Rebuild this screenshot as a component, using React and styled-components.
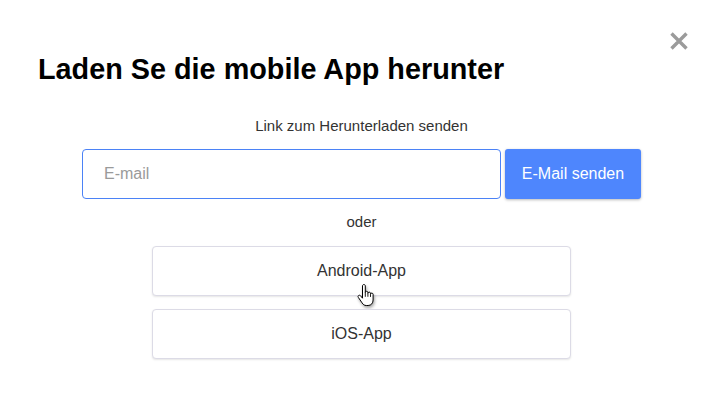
import React, { useState } from "react"
import styled, { createGlobalStyle } from "styled-components"

const GlobalStyle = createGlobalStyle`
  html, body {
    margin: 0;
    padding: 0;
    background: #fff;
  }

  body {
    font-family: "Liberation Sans", Arial, sans-serif;
    color: #333;
  }
`

const Dialog = styled.div`
  position: relative;
  width: 723px;
  height: 409px;
  box-sizing: border-box;
  padding: 52px 38px 0;
  background: #fff;
  border-radius: 6px;
  display: flex;
  flex-direction: column;
`

const CloseButton = styled.button`
  position: absolute;
  top: 30px;
  right: 33px;
  width: 22px;
  height: 22px;
  padding: 0;
  border: none;
  background: transparent;
  cursor: pointer;

  svg {
    display: block;
  }
`

const Title = styled.h2`
  margin: 0;
  font-size: 28.8px;
  line-height: 34.5px;
  font-weight: 700;
  color: #000;
`

const Body = styled.div`
  display: flex;
  flex-direction: column;
  align-items: center;
  margin: 30px -38px 0;
`

const Hint = styled.p`
  margin: 0;
  font-size: 15px;
  line-height: 18px;
  color: #333;
`

const SendRow = styled.form`
  display: flex;
  gap: 4px;
  margin-top: 14px;
`

const EmailInput = styled.input`
  width: 419px;
  height: 50px;
  box-sizing: border-box;
  padding: 0 21px;
  border: 1px solid #4b82f6;
  border-radius: 4px;
  font-family: inherit;
  font-size: 16px;
  color: #333;
  outline: none;

  &::placeholder {
    color: #9a9a9a;
  }
`

const SendButton = styled.button`
  width: 136px;
  height: 50px;
  border: none;
  border-radius: 3px;
  background: #4e86fd;
  color: #fff;
  font-family: inherit;
  font-size: 16px;
  box-shadow: 0 1px 3px rgba(0, 0, 0, 0.28);
  cursor: pointer;
`

const Divider = styled.span`
  margin: 14px 0 15px;
  font-size: 15px;
  line-height: 18px;
  color: #333;
`

const StoreList = styled.div`
  display: flex;
  flex-direction: column;
  gap: 13px;
`

const StoreButton = styled.button`
  position: relative;
  width: 419px;
  height: 50px;
  border: 1px solid #dcdbe6;
  border-radius: 4px;
  background: #fff;
  color: #333;
  font-family: inherit;
  font-size: 16px;
  box-shadow: 0 1px 2px rgba(0, 0, 0, 0.1);
  cursor: pointer;
`

const Pointer = styled.svg`
  position: absolute;
  left: 203px;
  top: 37px;
  pointer-events: none;
  filter: drop-shadow(1px 2px 1.5px rgba(0, 0, 0, 0.35));
`

const stores = ["Android-App", "iOS-App"]

const App = () => {
  const [email, setEmail] = useState("")

  return (
    <>
      <GlobalStyle />
      <Dialog>
        <CloseButton aria-label="Schließen">
          <svg width="22" height="22" viewBox="0 0 22 22">
            <path
              d="M3.5 3.5L18.5 18.5M18.5 3.5L3.5 18.5"
              stroke="#9b9b9b"
              strokeWidth="3.4"
              strokeLinecap="butt"
            />
          </svg>
        </CloseButton>
        <Title>Laden Se die mobile App herunter</Title>
        <Body>
          <Hint>Link zum Herunterladen senden</Hint>
          <SendRow onSubmit={(e) => e.preventDefault()}>
            <EmailInput
              type="email"
              placeholder="E-mail"
              value={email}
              onChange={(e) => setEmail(e.target.value)}
            />
            <SendButton type="submit">E-Mail senden</SendButton>
          </SendRow>
          <Divider>oder</Divider>
          <StoreList>
            {stores.map((store, index) => (
              <StoreButton key={store}>
                {store}
                {index === 0 && (
                  <Pointer width="20" height="23" viewBox="0 0 20 23">
                    <path
                      d="M6.5 2c0-.9.6-1.5 1.4-1.5S9.3 1.1 9.3 2v6.6c0-.8.6-1.3 1.3-1.3s1.3.5 1.3 1.3v.8c0-.8.6-1.3 1.3-1.3s1.3.5 1.3 1.3v.9c0-.7.6-1.2 1.3-1.2s1.3.5 1.3 1.2V16c0 3.2-2 5.5-5 5.5h-1.8c-2 0-3.2-1-4.2-2.6L2.3 13.4c-.5-.8-.3-1.6.4-2s1.5-.1 2 .6l1.8 2.2Z"
                      fill="#fff"
                      stroke="#000"
                      strokeWidth="1"
                      strokeLinejoin="round"
                    />
                    <path
                      d="M9.3 8.6v4.2M11.9 9.4v3.4M14.5 10.3v2.6"
                      stroke="#000"
                      strokeWidth="0.9"
                    />
                  </Pointer>
                )}
              </StoreButton>
            ))}
          </StoreList>
        </Body>
      </Dialog>
    </>
  )
}

export default App
